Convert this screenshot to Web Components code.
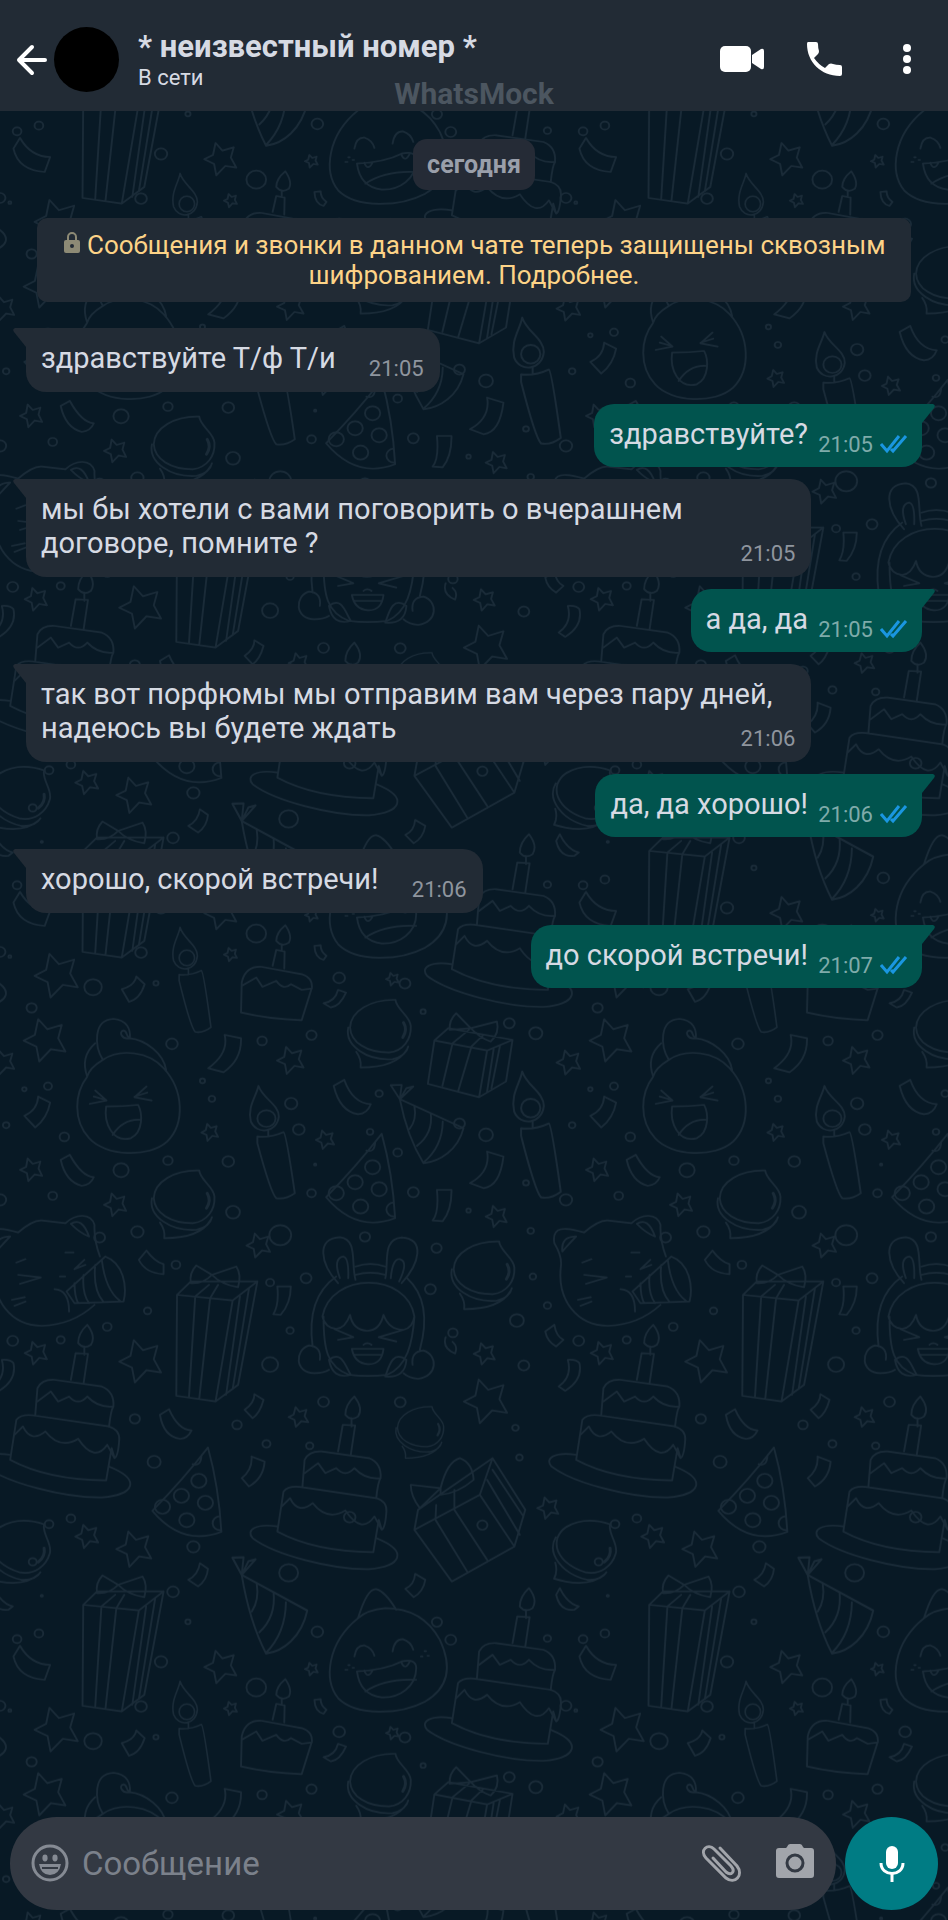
<!DOCTYPE html>
<html lang="ru">
<head>
<meta charset="utf-8">
<meta name="viewport" content="width=device-width, initial-scale=1">
<title>Чат</title>
<style>
  body {
    margin: 0;
    background: #081925;
    color: #d6dae3;
    font-family: Roboto, "Noto Sans", sans-serif;
  }
</style>
</head>
<body>
<chat-screen>
  <chat-header slot="header" name="* неизвестный номер *" status="В сети"></chat-header>
  <date-chip>сегодня</date-chip>
  <chat-notice href="#encryption">Сообщения и звонки в данном чате теперь защищены сквозным шифрованием. Подробнее.</chat-notice>
  <chat-message time="21:05">здравствуйте Т/ф Т/и</chat-message>
  <chat-message time="21:05" out>здравствуйте?</chat-message>
  <chat-message time="21:05">мы бы хотели с вами поговорить о вчерашнем договоре, помните ?</chat-message>
  <chat-message time="21:05" out>а да, да</chat-message>
  <chat-message time="21:06">так вот порфюмы мы отправим вам через пару дней, надеюсь вы будете ждать</chat-message>
  <chat-message time="21:06" out>да, да хорошо!</chat-message>
  <chat-message time="21:06">хорошо, скорой встречи!</chat-message>
  <chat-message time="21:07" out>до скорой встречи!</chat-message>
  <chat-composer slot="footer"></chat-composer>
</chat-screen>

<script>
// x, y, radius
const DOTS = [
  [87, 84, 14], [473, 192, 16], [721, 183, 13], [857, 166, 14], [1164, 95, 7], [1401, 130, 15], [1474, 160, 18],
  [557, 303, 7], [583, 357, 9], [132, 319, 11], [67, 328, 6], [17, 436, 9], [177, 471, 13], [333, 571, 21],
  [462, 542, 13], [628, 545, 16], [145, 648, 12], [801, 371, 17], [822, 449, 16], [1043, 341, 10], [1018, 456, 9],
  [1094, 518, 12], [1264, 431, 15], [1337, 465, 19], [857, 640, 12], [1137, 637, 15], [1447, 609, 8], [641, 697, 19],
  [378, 756, 17], [274, 773, 15], [771, 766, 30], [1004, 771, 14], [1201, 805, 14], [1289, 692, 6], [1460, 753, 9],
  [484, 855, 12], [842, 895, 15], [867, 554, 3], [0, 660, 17],
  [743, 908, 11], [406, 993, 10], [295, 1041, 12], [167, 1080, 11], [35, 1083, 15], [743, 1154, 22], [798, 1052, 10],
  [1184, 928, 15], [1466, 890, 9], [1506, 977, 10], [1422, 1022, 19], [1246, 1059, 13], [1441, 1157, 15],
  [371, 1317, 14], [652, 1335, 13], [733, 1392, 11], [852, 1398, 10], [890, 1266, 15], [1101, 1267, 15],
  [1418, 1344, 9], [1429, 1433, 9], [424, 1446, 18],
  [195, 1616, 12], [135, 1633, 12], [90, 1746, 11], [532, 1701, 17], [476, 1836, 16], [794, 1779, 26], [962, 1612, 16],
  [1327, 1636, 14], [873, 1956, 16], [1202, 1927, 14], [517, 1926, 7], [107, 1961, 12], [1240, 1980, 15],
  [47, 1978, 12], [443, 2046, 17], [705, 2123, 27], [388, 2180, 16], [256, 2284, 24], [429, 2272, 7],
  [933, 2256, 16], [1114, 2273, 15], [1506, 1976, 10], [1557, 2178, 15], [115, 1848, 3], [27, 2192, 4]
];
const STARS = [
  [125, 182, 60], [800, 242, 38], [578, 458, 24], [895, 480, 26], [87, 570, 32], [318, 675, 32], [712, 797, 34],
  [1366, 710, 30], [8, 248, 34], [100, 1120, 32], [388, 1145, 60], [822, 1312, 28], [1333, 1122, 30], [1338, 1265, 62],
  [240, 1670, 33], [370, 1708, 50], [1508, 1585, 30], [608, 2062, 46], [857, 2068, 18], [635, 2186, 19],
  [157, 2250, 62], [1080, 2260, 18]
];
const STREAMERS = `
  M930 30L952 38Q935 80 910 83L890 70Q922 65 930 30Z
  M618 165L663 175Q665 240 615 277L573 265Q630 220 618 165Z
  M105 350L138 368Q130 415 97 443L67 408Q103 390 105 350Z
  M167 540L192 525Q225 590 258 592Q250 615 225 618Q180 605 167 540Z
  M918 318L947 300Q970 370 1020 373Q1010 403 985 403Q935 395 918 318Z
  M1340 515L1385 530Q1375 620 1330 625L1293 610Q1350 575 1340 515Z
  M1202 630H1242Q1243 690 1218 724L1190 722Q1208 700 1202 630Z
  M403 812Q425 845 450 853V883Q400 880 382 840Z
  M763 920H800Q800 970 772 1005L752 1003Q768 975 763 920Z
  M700 1243L725 1260Q715 1300 695 1315L673 1290Q700 1270 700 1243Z
  M440 1305L465 1288Q490 1350 527 1352Q515 1378 495 1377Q450 1370 440 1305Z
  M692 1430L728 1445Q725 1495 685 1520L665 1495Q695 1470 692 1430Z
  M1500 1055L1525 1035Q1530 1070 1550 1080L1530 1100Q1505 1085 1500 1055Z
  M1226 1072Q1216 1105 1252 1121Q1260 1100 1245 1086
  M1562 1140Q1575 1190 1537 1220L1555 1233Q1604 1200 1594 1150Q1586 1138 1562 1140Z
  M550 1750L572 1767Q570 1800 545 1820L518 1800Q545 1785 550 1750Z
  M1142 1782L1170 1800Q1165 1835 1138 1852L1115 1827Q1140 1815 1142 1782Z
  M55 1998Q85 2055 138 2055L123 2100Q50 2095 37 2030Z
  M375 2252L398 2275Q385 2320 355 2328L335 2290Q370 2280 375 2252Z
  M865 2160Q866 2195 890 2202L898 2190Q882 2178 882 2158Z
  M1540 1825Q1560 1870 1592 1880L1580 1890Q1540 1895 1530 1845Z`;

const starPath = ([x, y, r]) => {
  const points = [[-20, -64], [5, -34], [45, -47], [35, -7], [55, 33], [15, 26], [-17, 63], [-25, 18], [-60, 0], [-29, -17]];
  return "M" + points.map(([px, py]) => `${Math.round(x + px * r / 60)} ${Math.round(y + py * r / 60)}`).join("L") + "Z";
};

class ChatWallpaper extends HTMLElement {
  constructor() {
    super();
    this.attachShadow({ mode: "open" });
  }

  connectedCallback() {
    this.shadowRoot.innerHTML = `
      <style>
        :host {
          display: block;
          overflow: hidden;
          background: #081925;
          contain: size;
        }

        svg {
          display: block;
          width: 100%;
          height: 100%;
        }
      </style>
      <svg aria-hidden="true">
        <defs>
          <g id="candle">
            <path d="M711 318C705 350 680 380 690 425C705 465 762 460 767 410C768 375 722 355 711 318ZM738 452V470M708 470Q745 474 780 457Q787 460 811 640Q785 660 760 655Q745 640 708 490Z"/>
            <circle cx="733" cy="416" r="25"/>
          </g>
          <g id="ball">
            <path d="M548 572C480 570 425 605 423 655C425 700 470 730 530 730C570 725 592 690 590 650C588 620 550 600 548 572ZM418 655C408 710 470 755 540 750Q578 740 583 712M440 728Q455 750 452 775Q550 775 580 720"/>
            <path d="M570 640Q582 662 568 685" stroke-width="8"/>
          </g>
          <g id="hat">
            <path d="M1100 358L1275 445C1260 510 1210 545 1165 550Q1120 470 1100 358ZM1140 378Q1147 420 1127 447M1185 400Q1192 460 1147 498M1218 425Q1217 500 1165 548M1100 358L1075 316L1105 315ZM1100 358L1118 325L1137 320Z"/>
          </g>
          <g id="pizza">
            <path d="M1050 462Q1080 580 1087 715Q980 760 897 652Q980 560 1050 462ZM1083 668A20 20 0 1 0 1085 710M1008 512Q1030 520 1032 488"/>
            <circle cx="1025" cy="562" r="21"/><circle cx="977" cy="607" r="21"/><circle cx="1043" cy="628" r="21"/>
            <circle cx="992" cy="680" r="21"/><circle cx="925" cy="640" r="21"/>
          </g>
          <g id="tallgift">
            <path d="M487 945L525 905L708 905L655 1215L593 1265L485 1248ZM487 945L640 962L708 905M640 962L593 1265M537 950L520 1250M578 955L548 1258M660 950L622 1245M685 925L640 1228M583 885L540 857Q520 880 525 910Q560 912 583 885Q610 915 655 922Q665 885 650 860ZM537 950L575 915M578 955L600 915"/>
          </g>
          <g id="cake">
            <path d="M97 1305L103 1225Q115 1198 150 1200L280 1220Q315 1235 312 1280Q305 1290 300 1340M103 1265L140 1235L160 1265L190 1250Q215 1280 240 1250Q270 1285 312 1280"/>
            <path d="M28 1440L45 1320Q60 1300 100 1308L300 1340Q330 1350 328 1380Q325 1430 315 1435L307 1405L292 1502Q130 1500 28 1440ZM40 1365L63 1340Q85 1390 125 1355Q165 1410 215 1377Q260 1450 295 1395L315 1435"/>
            <path d="M28 1425C-30 1415-60 1435-40 1460C20 1510 180 1555 280 1553C370 1545 390 1500 300 1460M195 1200L208 1120L242 1122L230 1210M232 1100V1125M240 1035Q265 1070 250 1095Q230 1110 215 1090Q215 1060 240 1035Z"/>
          </g>
          <g id="tile">
            <g>${DOTS.map(([x, y, r]) => `<circle cx="${x}" cy="${y}" r="${r}"/>`).join("")}</g>
            <path d="${STARS.map(starPath).join("")}"/>
            <path d="${STREAMERS}"/>
            <use href="#candle"/>
            <use href="#candle" transform="translate(683 -81) scale(1.06 1.12)"/>
            <use href="#candle" transform="translate(-109 1809) scale(.85 .93)"/>
            <use href="#ball"/>
            <use href="#ball" x="540" y="-512"/>
            <use href="#ball" x="825" y="213"/>
            <use href="#ball" transform="translate(772 846) scale(.76)"/>
            <use href="#ball" transform="translate(-176 876) rotate(18 505 665) translate(-212 245)"/>
            <use href="#hat"/>
            <use href="#hat" transform="translate(-468 1345) scale(1.03 1.23)"/>
            <use href="#pizza"/>
            <use href="#pizza" x="-478" y="941"/>
            <use href="#tallgift"/>
            <use href="#tallgift" x="-258" y="930"/>
            <use href="#cake"/>
            <use href="#cake" x="735" y="215"/>
            <use href="#cake" x="1215" y="790"/>
            <!-- hooded face -->
            <path d="M240 290C205 340 200 420 245 475C290 530 410 535 460 485C510 430 505 330 450 265C410 215 330 205 283 240C260 255 245 270 240 290ZM240 290Q220 230 262 190M283 240C260 200 255 120 312 117C350 120 360 150 357 175C335 180 325 155 340 152C352 155 345 170 357 175C400 180 450 220 457 270M262 332L293 362L247 372M258 350L290 360M403 320L370 352L417 362M370 350L405 338M292 380Q340 380 380 375C392 400 395 455 360 475C310 490 285 430 292 380ZM310 465Q340 415 388 420"/>
            <!-- small gift -->
            <path d="M1195 182L1233 145L1410 180L1392 305L1318 352L1177 312ZM1195 182L1340 212L1410 180M1340 212L1318 352M1245 190L1217 318M1297 200L1260 335M1375 200L1352 325M1358 208L1340 335M1295 145L1255 100Q1235 120 1237 150ZM1295 145L1367 125Q1375 160 1350 185Q1320 175 1295 145ZM1245 190L1290 150M1297 200L1330 165"/>
            <!-- cat with a party horn -->
            <path d="M-32 790C-40 740-5 740 50 758Q90 720 115 722L180 730C210 700 250 700 260 735Q258 780 275 830M195 732Q225 710 245 770Q220 760 195 732M-32 790Q-10 830-14 860C-25 960 30 1038 115 1038Q200 1035 260 975M-10 815Q-15 770 28 770Q10 790-10 815M45 848L70 838M180 818H202M50 885L112 893L55 912M232 840L205 868L235 855M165 890H179M33 960L68 952M40 978L70 965M183 935L290 830C340 850 350 920 340 965L205 970ZM150 928Q190 930 190 995M262 855Q255 930 285 967M280 840Q290 930 330 963M230 885Q225 940 245 970M205 910Q205 950 215 970"/>
            <!-- girl with bunny ears -->
            <path d="M930 910C880 850 870 775 935 772C985 778 965 850 978 900M935 895Q915 835 945 830Q960 835 958 895M1105 910C1155 850 1170 778 1105 773C1050 778 1070 850 1060 895M1075 895Q1080 835 1100 838Q1125 845 1098 905M978 860Q1019 845 1060 860M978 885Q1019 872 1060 885M925 890C860 940 850 1020 860 1100M1120 895C1175 950 1175 1030 1155 1110M890 1010C890 1110 900 1160 960 1185Q1010 1192 1065 1185C1120 1160 1135 1090 1140 1010M887 1010C910 875 1120 875 1140 1010Q1135 1045 1110 1050Q1070 1050 1055 1005Q1045 1052 1010 1053Q970 1050 963 1005Q950 1045 925 1047Q895 1045 887 1010ZM920 1048L972 1072L930 1080M1110 1050L1042 1072L1090 1085M968 1107H1055Q1050 1155 1012 1153Q975 1150 968 1107ZM975 1125H1050M1000 1095Q1010 1085 1022 1095M905 1140C940 1110 950 1160 965 1185Q915 1200 905 1140ZM1118 1140C1080 1110 1070 1160 1060 1190Q1115 1195 1118 1140ZM880 1140Q885 1100 850 1097C810 1110 810 1180 865 1180Q890 1180 905 1170M1135 1155Q1130 1115 1165 1112C1205 1125 1205 1190 1150 1197Q1125 1195 1110 1180"/>
            <!-- tilted gift -->
            <path d="M1140 1650L1150 1590L1355 1435L1445 1590L1415 1700L1243 1805ZM1140 1650L1320 1545L1355 1435M1320 1545L1415 1700M1198 1620L1285 1775M1250 1590L1340 1740M1340 1500L1430 1665M1355 1470L1440 1610M1250 1530V1590M1198 1620L1200 1575M1212 1525L1130 1515Q1130 1550 1155 1585ZM1212 1525Q1230 1445 1265 1435Q1300 1450 1303 1500Q1260 1540 1212 1545Z"/>
            <!-- slice of cake -->
            <path d="M663 2360L665 2270Q675 2220 720 2223L830 2245Q860 2255 858 2285L830 2383Q740 2380 663 2360ZM665 2280L705 2255L722 2283L760 2265Q780 2295 800 2275L830 2292L858 2288M750 2220L760 2172L783 2177L782 2228M785 2098Q805 2130 795 2150Q775 2165 760 2145Q760 2120 785 2098ZM775 2158V2175"/>
            <!-- laughing monster -->
            <path d="M985 1915C900 1990 890 2100 930 2155C980 2210 1100 2205 1170 2165C1240 2120 1240 2050 1210 1980C1170 1900 1110 1885 1060 1885Q1010 1890 985 1915ZM985 1915Q1010 1825 1035 1828Q1060 1835 1090 1890M975 2030Q980 1995 1003 1997Q1025 2005 1030 2028M1080 2015Q1085 1978 1108 1978Q1130 1985 1137 2010M982 2075Q1060 2070 1105 2045Q1145 2035 1145 2065C1145 2120 1100 2155 1050 2153Q990 2145 982 2075ZM1005 2135Q1060 2095 1145 2100M1002 2072Q1012 2100 1026 2070M1104 2048Q1115 2075 1128 2043M950 2070H956M958 2056H962M970 2064H974M1158 2030H1162M1168 2014H1172M1176 2028H1180"/>
          </g>
          <pattern id="doodles" width="1557" height="2262" patternUnits="userSpaceOnUse" patternTransform="translate(0 -528) scale(.3635 .3333)">
            <g fill="none" stroke="#1a2b38" stroke-width="5" stroke-linejoin="round" stroke-linecap="round">
              <use href="#tile"/>
              <use href="#tile" x="-1557"/>
              <use href="#tile" x="1557"/>
              <use href="#tile" y="-2262"/>
              <use href="#tile" x="-1557" y="-2262"/>
            </g>
          </pattern>
        </defs>
        <rect width="100%" height="100%" fill="url(#doodles)"/>
      </svg>
    `;
  }
}

class ChatScreen extends HTMLElement {
  constructor() {
    super();
    this.attachShadow({ mode: "open" });
  }

  connectedCallback() {
    this.shadowRoot.innerHTML = `
      <style>
        :host {
          display: grid;
          min-height: 100vh;
        }

        chat-wallpaper,
        .column {
          grid-area: 1 / 1;
        }

        .column {
          display: flex;
          flex-direction: column;
          min-width: 0;
        }

        main {
          flex: 1;
          display: flex;
          flex-direction: column;
          gap: 12px;
          padding: 28px 12px;
        }
      </style>
      <chat-wallpaper></chat-wallpaper>
      <div class="column">
        <slot name="header"></slot>
        <main><slot></slot></main>
        <slot name="footer"></slot>
      </div>
    `;
  }
}

class ChatHeader extends HTMLElement {
  constructor() {
    super();
    this.attachShadow({ mode: "open" });
  }

  connectedCallback() {
    this.shadowRoot.innerHTML = `
      <style>
        :host {
          display: block;
          position: relative;
          background: #222b35;
        }

        header {
          display: flex;
          align-items: center;
          height: 111px;
          padding: 8px 18px 0 12px;
          box-sizing: border-box;
        }

        button {
          display: flex;
          padding: 0;
          border: 0;
          background: none;
          color: #fff;
          cursor: pointer;
        }

        .avatar {
          width: 65px;
          height: 65px;
          margin-left: 2px;
          border-radius: 50%;
          background: #000;
        }

        .who {
          flex: 1;
          margin-left: 19px;
        }

        h1 {
          margin: 0;
          font-size: 31px;
          line-height: 36px;
          font-weight: 700;
        }

        p {
          margin: 0;
          font-size: 22px;
          line-height: 26px;
        }

        .actions {
          display: flex;
          gap: 34px;
        }

        .mark {
          position: absolute;
          left: 0;
          right: 0;
          bottom: 0;
          font-size: 30px;
          line-height: 34px;
          font-weight: 700;
          text-align: center;
          color: #4c5660;
          pointer-events: none;
        }
      </style>
      <header>
        <button type="button" aria-label="Назад">
          <svg width="40" height="40" viewBox="0 0 40 40" fill="none" stroke="#fff" stroke-width="4" stroke-linecap="round" stroke-linejoin="round"><path d="M33 20H7M20 7L7 20L20 33"/></svg>
        </button>
        <div class="avatar"></div>
        <div class="who">
          <h1>${this.getAttribute("name")}</h1>
          <p>${this.getAttribute("status")}</p>
        </div>
        <div class="actions">
          <button type="button" aria-label="Видеозвонок">
            <svg width="48" height="48" viewBox="0 0 48 48" fill="#fff"><rect x="2" y="10" width="31" height="26" rx="5"/><path d="M34 19L43 13Q46 12 46 15V31Q46 34 43 33L34 27Z"/></svg>
          </button>
          <button type="button" aria-label="Позвонить">
            <svg width="48" height="48" viewBox="0 0 48 48" fill="#fff"><path d="M8 6H16Q18 6 18 8Q18 12 19 15Q19 17 18 18L14 22Q19 29 25 32L29 28Q31 27 33 28Q36 29 40 29Q42 29 42 31V38Q42 40 40 40C21 40 7 26 7 8Q7 6 8 6Z"/></svg>
          </button>
          <button type="button" aria-label="Меню">
            <svg width="48" height="48" viewBox="0 0 48 48" fill="#fff"><circle cx="25" cy="12" r="4"/><circle cx="25" cy="23" r="4"/><circle cx="25" cy="34" r="4"/></svg>
          </button>
        </div>
      </header>
      <div class="mark">WhatsMock</div>
    `;
  }
}

class DateChip extends HTMLElement {
  constructor() {
    super();
    this.attachShadow({ mode: "open" });
    this.shadowRoot.innerHTML = `
      <style>
        :host {
          display: block;
          align-self: center;
          margin-bottom: 16px;
          padding: 10px 14px;
          border-radius: 14px;
          background: #252b36;
          color: #9a9faa;
          font-size: 25px;
          line-height: 31px;
          font-weight: 700;
        }
      </style>
      <slot></slot>
    `;
  }
}

class ChatNotice extends HTMLElement {
  constructor() {
    super();
    this.attachShadow({ mode: "open" });
  }

  connectedCallback() {
    this.shadowRoot.innerHTML = `
      <style>
        :host {
          display: block;
          margin: 0 25px 14px;
          border-radius: 10px;
          background: #222b35;
        }

        a {
          display: block;
          padding: 12px 20px;
          color: #fdd387;
          font-size: 26px;
          line-height: 30px;
          text-align: center;
          text-decoration: none;
        }
      </style>
      <a href="${this.getAttribute("href")}">
        <svg width="18" height="22" viewBox="0 0 18 22" aria-hidden="true"><path d="M5 9V5A4 4 0 0 1 13 5V9" fill="none" stroke="#8d8a75" stroke-width="2"/><rect x="1" y="8" width="16" height="13" rx="2" fill="#8d8a75"/><circle cx="9" cy="14" r="2" fill="#222b35"/></svg>
        <slot></slot>
      </a>
    `;
  }
}

class ChatMessage extends HTMLElement {
  constructor() {
    super();
    this.attachShadow({ mode: "open" });
  }

  connectedCallback() {
    const out = this.hasAttribute("out");
    const ticks = `<svg width="28" height="20" viewBox="0 0 28 20" fill="none" stroke="#1a96e0" stroke-width="3" aria-hidden="true"><path d="M1 9L7 16L19 1M11 14L13 16L26 1"/></svg>`;
    this.shadowRoot.innerHTML = `
      <style>
        :host {
          --bubble: #222b35;
          --meta: #8f959e;
          display: flex;
        }

        :host([out]) {
          --bubble: #01544e;
          --meta: #7fabaa;
          flex-direction: row-reverse;
        }

        .tail {
          flex: none;
          fill: var(--bubble);
        }

        :host([out]) .tail {
          transform: scaleX(-1);
        }

        .bubble {
          display: grid;
          max-width: 85%;
          box-sizing: border-box;
          padding: 13px 16px 17px 15px;
          border-radius: 0 20px 20px 20px;
          background: var(--bubble);
        }

        :host([out]) .bubble {
          padding: 13px 14px 16px 15px;
          border-radius: 20px 0 20px 20px;
        }

        .text,
        .meta {
          grid-area: 1 / 1;
        }

        .text {
          font-size: 29px;
          line-height: 34px;
        }

        .room {
          display: inline-block;
          width: 88px;
        }

        :host([out]) .room {
          width: 100px;
        }

        .meta {
          display: flex;
          align-items: center;
          gap: 7px;
          place-self: end;
          margin-bottom: -7px;
          color: var(--meta);
          font-size: 22px;
          line-height: 26px;
        }
      </style>
      <svg class="tail" width="14" height="20" viewBox="0 0 14 20" aria-hidden="true"><path d="M14 0H3Q0 1 2 4L14 19Z"/></svg>
      <div class="bubble">
        <div class="text"><slot></slot><span class="room"></span></div>
        <div class="meta"><time>${this.getAttribute("time")}</time>${out ? ticks : ""}</div>
      </div>
    `;
  }
}

class ChatComposer extends HTMLElement {
  constructor() {
    super();
    this.attachShadow({ mode: "open" });
  }

  connectedCallback() {
    this.shadowRoot.innerHTML = `
      <style>
        :host {
          display: block;
        }

        form {
          display: flex;
          gap: 9px;
          padding: 10px;
        }

        .field {
          flex: 1;
          display: flex;
          align-items: center;
          min-width: 0;
          padding: 0 19px;
          border-radius: 47px;
          background: #333943;
        }

        input {
          flex: 1;
          min-width: 0;
          margin: 0 0 0 11px;
          padding: 0;
          border: 0;
          outline: 0;
          background: none;
          color: #d6dae3;
          font: 33px/40px Roboto, "Noto Sans", sans-serif;
        }

        input::placeholder {
          color: #7b818b;
          opacity: 1;
        }

        button {
          display: flex;
          align-items: center;
          justify-content: center;
          padding: 0;
          border: 0;
          background: none;
          cursor: pointer;
        }

        .attach {
          margin-right: 30px;
        }

        .mic {
          flex: none;
          width: 93px;
          height: 93px;
          border-radius: 50%;
          background: #007c84;
        }
      </style>
      <form>
        <div class="field">
          <button type="button" aria-label="Эмодзи">
            <svg width="42" height="42" viewBox="0 0 42 42" fill="#858a93"><circle cx="21" cy="20" r="17" fill="none" stroke="#858a93" stroke-width="3"/><ellipse cx="16" cy="15" rx="2.6" ry="3.4"/><ellipse cx="26" cy="15" rx="2.6" ry="3.4"/><path d="M10 21H32Q30 32 21 32Q12 32 10 21Z"/><path d="M13 25H29" stroke="#333943" stroke-width="2"/></svg>
          </button>
          <input type="text" aria-label="Сообщение" placeholder="Сообщение">
          <button class="attach" type="button" aria-label="Прикрепить">
            <svg width="44" height="44" viewBox="0 0 44 44" fill="none" stroke="#a2a5ab" stroke-width="3" stroke-linecap="round"><path d="M21 6L38 24C45 33 36 43 27 36L7 16C0 8 9 1 15 7L32 24C37 30 32 34 27 30L14 16"/></svg>
          </button>
          <button type="button" aria-label="Камера">
            <svg width="44" height="44" viewBox="0 0 44 44" fill="#a2a5ab"><path d="M14 5Q15 2 17 2H27Q29 2 30 5L31 6H38Q41 6 41 9V33Q41 36 38 36H6Q3 36 3 33V9Q3 6 6 6H13Z"/><circle cx="22" cy="21" r="8" fill="none" stroke="#333943" stroke-width="3"/></svg>
          </button>
        </div>
        <button class="mic" type="button" aria-label="Голосовое сообщение">
          <svg width="40" height="40" viewBox="0 0 40 40" fill="none" stroke="#fff" stroke-width="3"><rect x="14" y="2" width="12" height="23" rx="6" fill="#fff" stroke="none"/><path d="M9 19C9 33 31 33 31 19M20 30V38"/></svg>
        </button>
      </form>
    `;
  }
}

customElements.define("chat-wallpaper", ChatWallpaper);
customElements.define("chat-screen", ChatScreen);
customElements.define("chat-header", ChatHeader);
customElements.define("date-chip", DateChip);
customElements.define("chat-notice", ChatNotice);
customElements.define("chat-message", ChatMessage);
customElements.define("chat-composer", ChatComposer);
</script>
</body>
</html>
